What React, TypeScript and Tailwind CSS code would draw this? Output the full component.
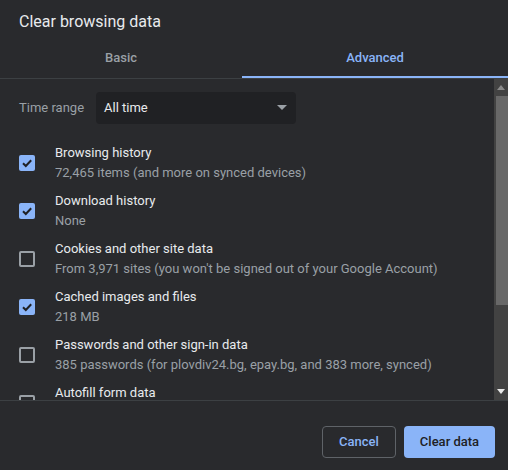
import React from 'react';

const font = { fontFamily: 'Roboto, "Liberation Sans", sans-serif' };

type Item = { title: string; sub: string; checked: boolean };

const items: Item[] = [
  { title: 'Browsing history', sub: '72,465 items (and more on synced devices)', checked: true },
  { title: 'Download history', sub: 'None', checked: true },
  { title: 'Cookies and other site data', sub: "From 3,971 sites (you won't be signed out of your Google Account)", checked: false },
  { title: 'Cached images and files', sub: '218 MB', checked: true },
  { title: 'Passwords and other sign-in data', sub: '385 passwords (for plovdiv24.bg, epay.bg, and 383 more, synced)', checked: false },
  { title: 'Autofill form data', sub: '', checked: false },
];

function Checkbox({ checked }: { checked: boolean }) {
  if (checked) {
    return (
      <div className="w-4 h-4 rounded-[2px] bg-[#8ab4f8] flex items-center justify-center shrink-0">
        <svg width="12" height="12" viewBox="0 0 12 12">
          <path d="M2 6.2 L4.8 9 L10.2 3.2" fill="none" stroke="#202124" strokeWidth="2" />
        </svg>
      </div>
    );
  }
  return <div className="w-4 h-4 rounded-[2px] border-2 border-[#9aa0a6] shrink-0" />;
}

export default function App() {
  return (
    <div className="w-[508px] h-[470px] bg-[#292a2d] flex flex-col overflow-hidden" style={font}>
      <div className="h-[35px] pl-[19px] pt-[12px] text-[16px] leading-[20px] text-[#e8eaed]">Clear browsing data</div>

      <div className="flex h-[44px] border-b border-[#3c4043]">
        <div className="w-[242px] flex items-center justify-center text-[13px] font-medium text-[#9aa0a6] pt-[2px]">Basic</div>
        <div className="flex-1 flex items-center justify-center text-[13px] font-medium text-[#8ab4f8] border-b-2 border-[#8ab4f8] pt-[4px]">Advanced</div>
      </div>

      <div className="h-[322px] flex border-b border-[#3c4043] overflow-hidden">
        <div className="flex-1 overflow-hidden">
          <div className="flex items-center pl-[19px] pt-[13px]">
            <span className="text-[13px] text-[#9aa0a6] w-[77px]">Time range</span>
            <div className="w-[200px] h-[32px] rounded bg-[#202124] flex items-center justify-between pl-[8px] pr-[8px]">
              <span className="text-[13px] text-[#e8eaed]">All time</span>
              <svg width="12" height="6" viewBox="0 0 12 6">
                <path d="M1 0 L11 0 L6 5 Z" fill="#9aa0a6" />
              </svg>
            </div>
          </div>
          <div className="pt-[15px]">
            {items.map((it, i) => (
              <div key={i} className="flex items-center h-[48px] pl-[19px]">
                <Checkbox checked={it.checked} />
                <div className="ml-[20px] flex flex-col text-[13px] leading-[20px] whitespace-nowrap">
                  <span className="text-[#e8eaed]">{it.title}</span>
                  <span className="text-[#9aa0a6] h-[20px]">{it.sub}</span>
                </div>
              </div>
            ))}
          </div>
        </div>
        <div className="w-[14px] bg-[#424242] flex flex-col items-center">
          <div className="h-[17px] w-full flex items-center justify-center">
            <svg width="8" height="5" viewBox="0 0 8 5"><path d="M0 5 L8 5 L4 0 Z" fill="#8a8a8a" /></svg>
          </div>
          <div className="w-[12px] ml-[2px] h-[209px] bg-[#686868]" />
          <div className="flex-1" />
          <div className="h-[17px] w-full flex items-center justify-center">
            <svg width="8" height="5" viewBox="0 0 8 5"><path d="M0 0 L8 0 L4 5 Z" fill="#e8e8e8" /></svg>
          </div>
        </div>
      </div>

      <div className="flex-1 flex items-start justify-end pt-[25px] pr-[13px] gap-[8px]">
        <button className="h-[32px] w-[74px] rounded border border-[#5f6368] text-[13px] font-medium text-[#8ab4f8]">Cancel</button>
        <button className="h-[32px] w-[91px] rounded bg-[#8ab4f8] text-[13px] font-medium text-[#202124]">Clear data</button>
      </div>
    </div>
  );
}
